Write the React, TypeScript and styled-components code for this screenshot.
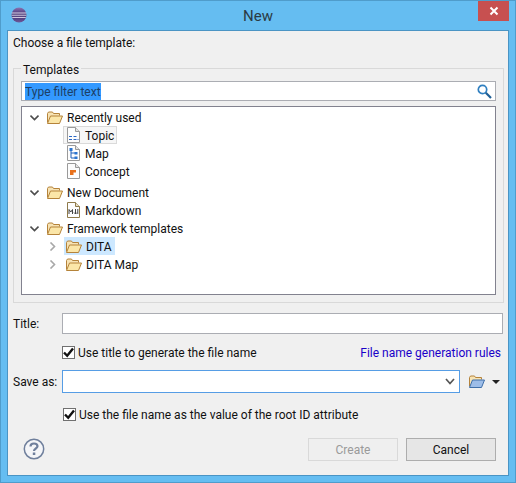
import React from "react";
import styled, { createGlobalStyle } from "styled-components";

const GlobalStyle = createGlobalStyle`
    html, body {
        margin: 0;
        padding: 0;
        background: #65bdf1;
    }
    * {
        box-sizing: border-box;
    }
`;

const EclipseLogo = () => (
    <svg width="16" height="16" viewBox="0 0 16 16">
        <defs>
            <linearGradient id="ecl" x1="0" y1="0" x2="0" y2="1">
                <stop offset="0" stopColor="#8d74b4" />
                <stop offset="0.5" stopColor="#3c2a6b" />
                <stop offset="1" stopColor="#6f5a9c" />
            </linearGradient>
        </defs>
        <circle cx="8" cy="8" r="7.5" fill="url(#ecl)" />
        <path d="M0.8 6h14.4M0.6 8.2h14.8M1.2 10.4h13.6" stroke="#efeaf5" strokeWidth="0.9" />
    </svg>
);

const OpenFolder = ({ blue }: { blue?: boolean }) => (
    <svg width="16" height="13" viewBox="0 0 16 13">
        <path d="M0.5 11.5V2.5l1-1.5h4l1 1.5h6v2" fill="#f7e3b4" stroke="#b5833a" />
        <path d="M0.5 12.5l3-7.5h12l-3 7.5z" fill={blue ? "#9dbde8" : "#fbe6a8"} stroke={blue ? "#3f6fa8" : "#b5833a"} />
    </svg>
);

const Twisty = ({ open }: { open?: boolean }) => (
    <svg width="9" height="9" viewBox="0 0 9 9">
        {open ? (
            <path d="M0.5 2.5L4.5 6.5L8.5 2.5" fill="none" stroke="#4d4d4d" strokeWidth="1.6" />
        ) : (
            <path d="M2.5 0.5L6.5 4.5L2.5 8.5" fill="none" stroke="#a8a8a8" strokeWidth="1.6" />
        )}
    </svg>
);

const DocBase = ({ children }: { children: React.ReactNode }) => (
    <svg width="13" height="16" viewBox="0 0 13 16">
        <path d="M0.5 0.5H8.5L12.5 4.5V15.5H0.5z" fill="#fdfdfd" stroke="#9a9a9a" />
        <path d="M8.5 0.5V4.5H12.5" fill="#e4e4e4" stroke="#9a9a9a" />
        {children}
    </svg>
);

const TopicIcon = () => (
    <DocBase>
        <path d="M2 9.5h3M6.5 9.5h3M2 12.5h3M6.5 12.5h3M10.5 12.5h1" stroke="#2a66c4" strokeWidth="1" />
    </DocBase>
);

const MapIcon = () => (
    <DocBase>
        <path d="M4 4v9h4M4 8h4" fill="none" stroke="#1f5fb8" />
        <rect x="2.5" y="3" width="3" height="3" fill="#2a74d0" />
        <rect x="7.5" y="7" width="3" height="2.5" fill="#2a74d0" />
        <rect x="7.5" y="11.5" width="3" height="2.5" fill="#2a74d0" />
    </DocBase>
);

const ConceptIcon = () => (
    <DocBase>
        <path d="M3 7h6v2.5h-2.5v2.5h-3.500z" fill="#e8701a" />
    </DocBase>
);

const MarkdownIcon = () => (
    <svg width="13" height="16" viewBox="0 0 13 16">
        <path d="M0.5 0.5H8.5L12.5 4.500V15.5H0.5z" fill="#fdfdfd" stroke="#8f7a4a" />
        <path d="M8.5 0.5V4.500H12.5" fill="#e8e0c8" stroke="#8f7a4a" />
        <path d="M2 12V7.500L3.800 10L5.500 7.500V12M8.500 7V12M7 10.500L8.500 12L10 10.500M10.800 7V12" fill="none" stroke="#444" strokeWidth="1" />
    </svg>
);

const SearchIcon = () => (
    <svg width="15" height="15" viewBox="0 0 15 15">
        <circle cx="5.500" cy="5.500" r="4.200" fill="#fff" stroke="#2f7fc0" strokeWidth="1.700" />
        <path d="M8.800 8.800L14 14" stroke="#1f5f96" strokeWidth="2.200" />
    </svg>
);

const HelpIcon = () => (
    <svg width="22" height="22" viewBox="0 0 22 22">
        <circle cx="11" cy="11" r="9.700" fill="#f4f5f8" stroke="#6f7f9c" strokeWidth="1.500" />
        <path d="M7.500 8.500C7.500 6.500 9 5.500 11 5.500C13 5.500 14.500 6.500 14.500 8.300C14.500 10.500 11 10.500 11 13" fill="none" stroke="#6f7f9c" strokeWidth="2.200" />
        <rect x="9.800" y="14.500" width="2.500" height="2.500" fill="#6f7f9c" />
    </svg>
);

export default function App() {
    return (
        <>
            <GlobalStyle />
            <Frame>
                <TitleBar>
                    <LogoSlot><EclipseLogo /></LogoSlot>
                    <TitleText>New</TitleText>
                    <CloseButton>
                        <svg width="10" height="10" viewBox="0 0 10 10">
                            <path d="M1.500 1.500L8.500 8.500M8.500 1.500L1.500 8.500" stroke="#fff" strokeWidth="2" />
                        </svg>
                    </CloseButton>
                </TitleBar>
                <Client>
                    <Heading>Choose a file template:</Heading>
                    <Group>
                        <Legend>Templates</Legend>
                        <FilterBox>
                            <FilterText>Type filter text</FilterText>
                            <SearchIcon />
                        </FilterBox>
                        <Tree>
                            <TreeRow indent={0}>
                                <TwistySlot><Twisty open /></TwistySlot>
                                <IconSlot><OpenFolder /></IconSlot>
                                <Label>Recently used</Label>
                            </TreeRow>
                            <TreeRow indent={1}>
                                <Selected outlined>
                                    <IconSlot><TopicIcon /></IconSlot>
                                    <Label>Topic</Label>
                                </Selected>
                            </TreeRow>
                            <TreeRow indent={1}>
                                <Selected>
                                    <IconSlot><MapIcon /></IconSlot>
                                    <Label>Map</Label>
                                </Selected>
                            </TreeRow>
                            <TreeRow indent={1}>
                                <Selected>
                                    <IconSlot><ConceptIcon /></IconSlot>
                                    <Label>Concept</Label>
                                </Selected>
                            </TreeRow>
                            <TreeRow indent={0} spaced>
                                <TwistySlot><Twisty open /></TwistySlot>
                                <IconSlot><OpenFolder /></IconSlot>
                                <Label>New Document</Label>
                            </TreeRow>
                            <TreeRow indent={1}>
                                <Selected>
                                    <IconSlot><MarkdownIcon /></IconSlot>
                                    <Label>Markdown</Label>
                                </Selected>
                            </TreeRow>
                            <TreeRow indent={0}>
                                <TwistySlot><Twisty open /></TwistySlot>
                                <IconSlot><OpenFolder /></IconSlot>
                                <Label>Framework templates</Label>
                            </TreeRow>
                            <TreeRow indent={2}>
                                <TwistySlot><Twisty /></TwistySlot>
                                <Selected filled>
                                    <IconSlot><OpenFolder /></IconSlot>
                                    <Label>DITA</Label>
                                </Selected>
                            </TreeRow>
                            <TreeRow indent={2}>
                                <TwistySlot><Twisty /></TwistySlot>
                                <Selected>
                                    <IconSlot><OpenFolder /></IconSlot>
                                    <Label>DITA Map</Label>
                                </Selected>
                            </TreeRow>
                        </Tree>
                    </Group>
                    <FieldRow>
                        <FieldLabel>Title:</FieldLabel>
                        <TitleInput />
                    </FieldRow>
                    <OptionRow>
                        <Check />
                        <Label>Use title to generate the file name</Label>
                        <RulesLink>File name generation rules</RulesLink>
                    </OptionRow>
                    <SaveRow>
                        <FieldLabel>Save as:</FieldLabel>
                        <SaveInput>
                            <svg width="10" height="7" viewBox="0 0 10 7">
                                <path d="M1 1L5 5.500L9 1" fill="none" stroke="#555" strokeWidth="1.700" />
                            </svg>
                        </SaveInput>
                        <BrowseSlot>
                            <OpenFolder blue />
                            <Caret />
                        </BrowseSlot>
                    </SaveRow>
                    <RootIdRow>
                        <Check />
                        <Label>Use the file name as the value of the root ID attribute</Label>
                    </RootIdRow>
                    <Footer>
                        <HelpSlot><HelpIcon /></HelpSlot>
                        <Buttons>
                            <DialogButton disabled>Create</DialogButton>
                            <DialogButton>Cancel</DialogButton>
                        </Buttons>
                    </Footer>
                </Client>
            </Frame>
        </>
    );
}

const Check = () => (
    <CheckBox>
        <svg width="11" height="11" viewBox="0 0 11 11">
            <path d="M1 5.500L4.200 8.800L10 1.500" fill="none" stroke="#111" strokeWidth="2.400" />
        </svg>
    </CheckBox>
);

const Frame = styled.div`
    width: 516px;
    height: 483px;
    display: flex;
    flex-direction: column;
    background-color: #65bdf1;
    border: 1px solid #4f9ccb;
    font-family: Roboto, "Noto Sans", sans-serif;
    font-size: 12px;
    color: #111;
`;

const TitleBar = styled.div`
    height: 29px;
    flex: none;
    display: flex;
    align-items: flex-start;
    position: relative;
`;

const LogoSlot = styled.div`
    margin: 6px 0 0 10px;
    display: flex;
`;

const TitleText = styled.div`
    position: absolute;
    left: 0;
    right: 0;
    top: 6px;
    text-align: center;
    font-size: 15px;
    color: #2b3a44;
`;

const CloseButton = styled.div`
    position: absolute;
    top: 0;
    right: 6px;
    width: 31px;
    height: 20px;
    background-color: #c75050;
    display: flex;
    align-items: center;
    justify-content: center;
`;

const Client = styled.div`
    flex: 1;
    margin: 0 6px 6px 6px;
    border: 1px solid #4a94c4;
    background-color: #f0f0f0;
    padding: 0 4px 0 5px;
    display: flex;
    flex-direction: column;
`;

const Heading = styled.div`
    height: 24px;
    line-height: 25px;
`;

const Group = styled.div`
    position: relative;
    height: 235px;
    margin-top: 13px;
    border: 1px solid #d9d9d9;
    padding: 12px 7px 0 7px;
`;

const Legend = styled.div`
    position: absolute;
    top: -7px;
    left: 7px;
    padding: 0 2px;
    background-color: #f0f0f0;
    line-height: 16px;
`;

const FilterBox = styled.div`
    height: 20px;
    background-color: #fff;
    border: 1px solid #abadb3;
    display: flex;
    align-items: center;
    justify-content: space-between;
    padding: 0 3px;
`;

const FilterText = styled.span`
    background-color: #3399ff;
    color: #1c3f66;
    line-height: 16px;
    padding-top: 1px;
    height: 17px;
`;

const Tree = styled.div`
    height: 189px;
    margin-top: 5px;
    background-color: #fff;
    border: 1px solid #82828f;
    padding-top: 1px;
`;

const TreeRow = styled.div<{ indent: number; spaced?: boolean }>`
    height: 18px;
    display: flex;
    align-items: center;
    margin-top: ${props => props.spaced ? "3px" : "0"};
    padding-left: ${props => [8, 41, 26][props.indent]}px;
`;

const TwistySlot = styled.div`
    width: 16px;
    display: flex;
`;

const IconSlot = styled.div`
    width: 18px;
    margin-right: 3px;
    display: flex;
    justify-content: center;
`;

const Label = styled.span`
    white-space: nowrap;
    padding-top: 1px;
`;

const Selected = styled.div<{ filled?: boolean; outlined?: boolean }>`
    height: 18px;
    display: flex;
    align-items: center;
    padding: 0 3px 0 1px;
    background-color: ${props => props.filled ? "#cde8ff" : props.outlined ? "#f6f6f6" : "transparent"};
    outline: ${props => props.outlined ? "1px solid #dadada" : "none"};
    outline-offset: -1px;
`;

const FieldRow = styled.div`
    display: flex;
    align-items: center;
    margin-top: 10px;
`;

const FieldLabel = styled.div`
    width: 49px;
    flex: none;
`;

const TitleInput = styled.div`
    width: 441px;
    height: 21px;
    background-color: #fff;
    border: 1px solid #abadb3;
`;

const OptionRow = styled.div`
    display: flex;
    align-items: center;
    gap: 3px;
    height: 18px;
    margin-top: 9px;
    padding-left: 49px;
    padding-right: 3px;
`;

const RulesLink = styled(Label)`
    margin-left: auto;
    color: #1a00c8;
`;

const CheckBox = styled.div`
    width: 13px;
    height: 13px;
    flex: none;
    background-color: #fff;
    border: 1px solid #707070;
    display: flex;
    align-items: center;
    justify-content: center;
`;

const SaveRow = styled.div`
    display: flex;
    align-items: center;
    margin-top: 9px;
`;

const SaveInput = styled.div`
    width: 398px;
    height: 23px;
    background-color: #fff;
    border: 1px solid #569de5;
    display: flex;
    align-items: center;
    justify-content: flex-end;
    padding-right: 4px;
`;

const BrowseSlot = styled.div`
    display: flex;
    align-items: center;
    gap: 7px;
    margin-left: 9px;
`;

const Caret = styled.div`
    width: 0;
    height: 0;
    border-left: 4px solid transparent;
    border-right: 4px solid transparent;
    border-top: 4px solid #222;
`;

const RootIdRow = styled.div`
    display: flex;
    align-items: center;
    gap: 3px;
    height: 18px;
    margin-top: 12px;
    padding-left: 50px;
`;

const Footer = styled.div`
    display: flex;
    align-items: flex-start;
    justify-content: space-between;
    margin-top: 15px;
    padding: 0 8px 0 10px;
`;

const HelpSlot = styled.div`
    display: flex;
`;

const Buttons = styled.div`
    display: flex;
    gap: 8px;
`;

const DialogButton = styled.button`
    width: 90px;
    height: 23px;
    padding: 1px 0 0;
    font-family: inherit;
    font-size: 12px;
    color: ${props => props.disabled ? "#9a9a9a" : "#111"};
    background-color: ${props => props.disabled ? "#efefef" : "#e6e6e6"};
    border: 1px solid ${props => props.disabled ? "#d9d9d9" : "#adadad"};
`;
